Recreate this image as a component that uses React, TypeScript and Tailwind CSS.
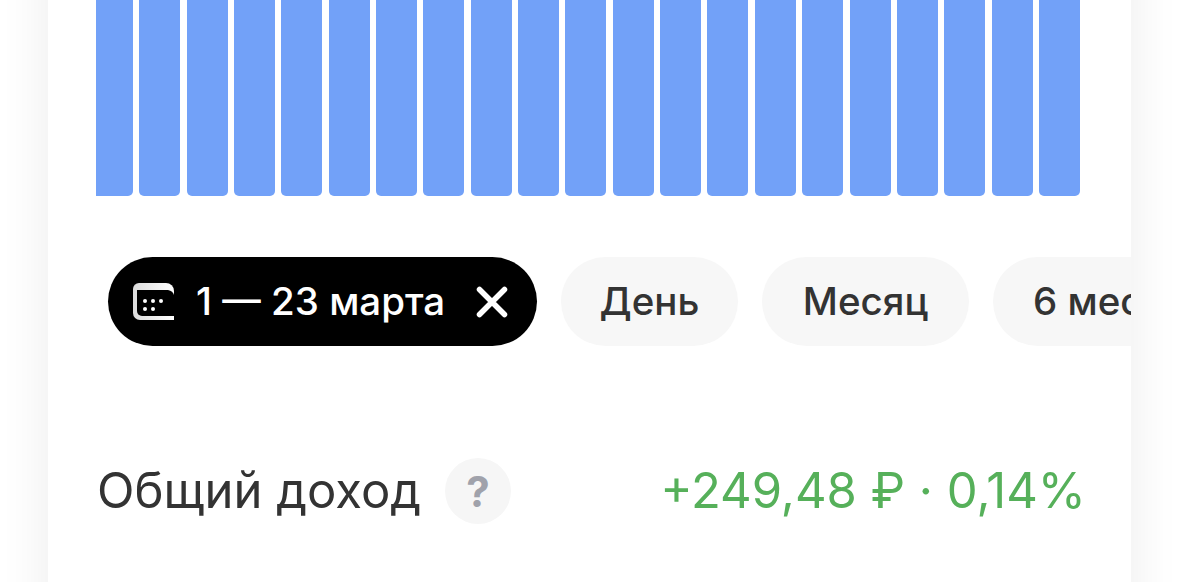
const bars = Array.from({ length: 20 });

function CalendarIcon() {
  return (
    <svg width="41" height="38" viewBox="0 0 41 38" className="shrink-0">
      <defs>
        <linearGradient id="calTop" x1="0" y1="0" x2="1" y2="0">
          <stop offset="0" stopColor="#dcdcdc" />
          <stop offset="1" stopColor="#ffffff" />
        </linearGradient>
      </defs>
      <path d="M6 0H33A8 8 0 0 1 41 8V37H7A7 7 0 0 1 0 30V6A6 6 0 0 1 6 0Z" fill="url(#calTop)" />
      <path d="M4 7H35Q40 8 41 12V33H9A5 5 0 0 1 4 28Z" fill="#000" />
      {[[12, 18], [20, 18], [28, 18], [12, 26], [20, 26]].map(([x, y], i) => (
        <circle key={i} cx={x} cy={y} r="2" fill="#fff" />
      ))}
    </svg>
  );
}

function CloseIcon() {
  return (
    <svg width="32" height="32" viewBox="0 0 32 32" className="shrink-0">
      <path d="M3.5 3.5L28.5 28.5M28.5 3.5L3.5 28.5" stroke="#fff" strokeWidth="5.5" strokeLinecap="round" />
    </svg>
  );
}

export default function App() {
  return (
    <div className="h-[582px] w-[1179px] overflow-hidden bg-white font-['Inter',sans-serif]">
      <div className="mx-[48px] -mt-[100px] h-[800px] overflow-hidden bg-white pt-[100px] shadow-[0_0_48px_rgba(0,0,0,0.08)]">
        <div className="ml-[48px] flex h-[196px] w-[984px] gap-[6.35px]">
          <div className="h-full w-[37px] shrink-0 rounded-br-[5px] bg-[#72a1f8]" />
          {bars.map((_, i) => (
            <div key={i} className="h-full w-[41px] shrink-0 rounded-b-[5px] bg-[#72a1f8]" />
          ))}
        </div>

        <div className="ml-[60px] mt-[61px] flex gap-[24px]">
          <div className="flex h-[89px] w-[429px] shrink-0 items-center rounded-[45px] bg-black pl-[25px] text-[38.5px] font-medium text-white">
            <CalendarIcon />
            <span className="ml-[22px] whitespace-nowrap">1 — 23 марта</span>
            <span className="ml-[31px]">
              <CloseIcon />
            </span>
          </div>
          <div className="flex h-[89px] w-[177px] shrink-0 items-center justify-center rounded-[45px] bg-[#f7f7f7] text-[38.5px] font-medium text-[#333333]">
            День
          </div>
          <div className="flex h-[89px] w-[207px] shrink-0 items-center justify-center rounded-[45px] bg-[#f7f7f7] text-[38.5px] font-medium text-[#333333]">
            Месяц
          </div>
          <div className="flex h-[89px] shrink-0 items-center rounded-[45px] bg-[#f7f7f7] px-[40px] text-[38.5px] font-medium text-[#333333]">
            6 месяцев
          </div>
        </div>

        <div className="ml-[49px] mr-[45px] mt-[112px] flex items-center justify-between">
          <div className="flex items-center text-[#333333]">
            <span className="text-[49px] leading-[66px]">Общий доход</span>
            <div className="ml-[24px] flex h-[66px] w-[66px] items-center justify-center rounded-full bg-[#f6f6f6] text-[42px] font-bold text-[#a0a2ab]">
              ?
            </div>
          </div>
          <span className="whitespace-nowrap text-[49px] leading-[66px] text-[#56b05a]">+249,48 ₽ · 0,14%</span>
        </div>
      </div>
    </div>
  );
}
